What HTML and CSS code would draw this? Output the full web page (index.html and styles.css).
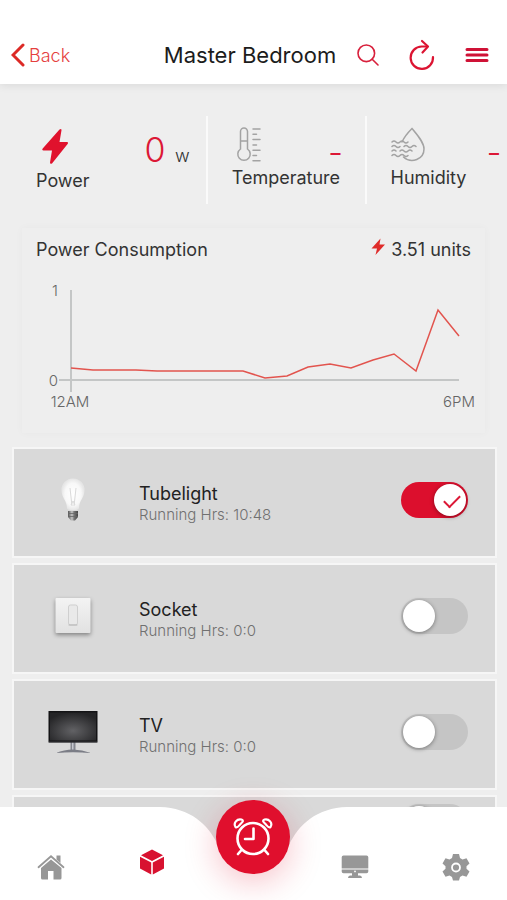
FILE: index.html
```html
<!DOCTYPE html>
<html lang="en">
<head>
    <meta charset="UTF-8">
    <meta name="viewport" content="width=device-width, initial-scale=1.0">
    <title>Master Bedroom</title>
    <link rel="stylesheet" href="styles.css">
</head>
<body>
    <div class="app">
        <header>
            <a href="#" class="back-link">
                <svg width="14" height="24" viewBox="0 0 14 24"><path d="M12 2 2 12l10 10" fill="none" stroke="#dc2a26" stroke-width="3" stroke-linecap="round"/></svg>
                Back
            </a>
            <h1>Master Bedroom</h1>
            <div class="header-actions">
                <button type="button" aria-label="Search">
                    <svg width="22" height="22" viewBox="0 0 22 22" fill="none" stroke="#d8203c" stroke-width="1.6" stroke-linecap="round"><circle cx="9.300" cy="9.300" r="8.300"/><path d="M15.200 15.200 21 21"/></svg>
                </button>
                <button type="button" aria-label="Refresh">
                    <svg width="26" height="32" viewBox="0 0 26 32" fill="none" stroke="#dc1432" stroke-width="2.200" stroke-linecap="round" stroke-linejoin="round"><path d="M24 18A11.200 11.200 0 1 1 12.800 7.500H18"/><path d="M13 2 19 7.500l-5.500 6"/></svg>
                </button>
                <button type="button" aria-label="Menu">
                    <svg width="24" height="16" viewBox="0 0 24 16" stroke="#cf1236" stroke-width="3" stroke-linecap="round"><path d="M2 2.500h20M2 8h20M2 13.500h20"/></svg>
                </button>
            </div>
        </header>

        <main>
            <section class="stats">
                <div class="stat stat-power">
                    <svg width="38" height="38" viewBox="0 0 38 38"><path d="M23.500 1.500q2-1.500 2 .8L23.500 14H31q1.800.2.800 1.800L16 35.500q-2 1-2-1L16 22.500H7.500q-2-.3-.8-2z" fill="#e0122d"/></svg>
                    <div class="stat-value">0 <small>w</small></div>
                    <span class="stat-label">Power</span>
                </div>
                <div class="stat stat-temp">
                    <svg width="34" height="36" viewBox="0 0 34 36" fill="none" stroke="#a3a3a3" stroke-width="1.500" stroke-linecap="round"><path d="M8.500 22V4.500a3.500 3.500 0 0 1 7 0V22a6.200 6.200 0 1 1-7 0zM8.500 14h7"/><path d="M21 2h7M21 7.300h3.500M21 12.600h7M21 17.900h3.500M21 23.200h7M21 28.500h3.500M21 33.800h7"/></svg>
                    <div class="stat-value">–</div>
                    <span class="stat-label">Temperature</span>
                </div>
                <div class="stat stat-humidity">
                    <svg width="34" height="36" viewBox="0 0 34 36" fill="none" stroke="#a3a3a3" stroke-width="1.500" stroke-linecap="round"><path d="M11 15C13 10.500 17.500 5 21 1.500c5.500 6.500 12 14 12 20.500 0 10-12.500 15.500-20.500 8"/><path d="M1 15q2-2 4 0t4 0 4 0 4 0M1 19.500q2-2 4 0t4 0M13 19.500q2-2 4 0t4 0 4 0M1 24q2-2 4 0M9 24q2-2 4 0t4 0 4 0M1 28.500q2-2 4 0t4 0 4 0 4 0"/></svg>
                    <div class="stat-value">–</div>
                    <span class="stat-label">Humidity</span>
                </div>
            </section>

            <section class="chart-card">
                <div class="chart-head">
                    <h2>Power Consumption</h2>
                    <span class="units">
                        <svg width="14" height="18" viewBox="0 0 14 18"><path d="M9.500.5 8.500 6.500H14L4.500 17 6 10.500H.5z" fill="#df2c2a"/></svg>
                        3.51 units
                    </span>
                </div>
                <svg class="chart" viewBox="0 0 463 158" role="img" aria-label="Power consumption by hour">
                    <path class="axis" d="M49 15V117M37 105H437"/>
                    <polyline class="line" points="49,93 71,95 92,95 114,95 135,96 157,96 178,96 200,96 221,96 243,103 265,101 286,92 308,89 329,93 351,85 372,79 394,96 416,35 437,61"/>
                    <text x="36" y="21" text-anchor="end">1</text>
                    <text x="36" y="111" text-anchor="end">0</text>
                    <text x="48" y="132" text-anchor="middle">12AM</text>
                    <text x="437" y="132" text-anchor="middle">6PM</text>
                </svg>
            </section>

            <ul class="devices">
                <li class="device">
                    <svg width="50" height="50" viewBox="0 0 50 50">
                        <defs>
                            <radialGradient id="glass"><stop offset="0" stop-color="#fff"/><stop offset=".7" stop-color="#f8f8f8"/><stop offset="1" stop-color="#e6e6e6"/></radialGradient>
                            <linearGradient id="cap"><stop offset="0" stop-color="#555"/><stop offset=".4" stop-color="#c5c5c5"/><stop offset=".6" stop-color="#777"/><stop offset="1" stop-color="#444"/></linearGradient>
                        </defs>
                        <path d="M25 3.500A11.500 11.500 0 0 0 13.500 15c0 8 5.500 10.500 5.500 18 0 3 12 3 12 0 0-7.500 5.500-10 5.500-18A11.500 11.500 0 0 0 25 3.500z" fill="url(#glass)"/>
                        <path d="m22 13 2 18M28 13l-2 18M23 30l2-4 2 4" fill="none" stroke="#dadada"/>
                        <path d="M20 36h10v6l-3 3.500h-4L20 42z" fill="url(#cap)"/>
                        <path d="M20 38.500h10M20 41.500h10" stroke="#666" stroke-width=".8"/>
                    </svg>
                    <div class="device-info">
                        <label for="tubelight">Tubelight</label>
                        <p>Running Hrs: 10:48</p>
                    </div>
                    <input type="checkbox" class="toggle" id="tubelight" checked>
                </li>
                <li class="device">
                    <svg width="50" height="50" viewBox="0 0 50 50">
                        <defs>
                            <linearGradient id="plate" x2="0" y2="1"><stop offset="0" stop-color="#f3f3f3"/><stop offset="1" stop-color="#e2e2e2"/></linearGradient>
                        </defs>
                        <rect class="plate" x="7.500" y="7" width="35" height="35" rx="1" fill="url(#plate)"/>
                        <rect x="20.500" y="14" width="9" height="20" rx="2" fill="#e9e9e9" stroke="#cfcfcf"/>
                        <path d="M21 34h8" stroke="#b5b5b5" stroke-linecap="round"/>
                    </svg>
                    <div class="device-info">
                        <label for="socket">Socket</label>
                        <p>Running Hrs: 0:0</p>
                    </div>
                    <input type="checkbox" class="toggle" id="socket">
                </li>
                <li class="device">
                    <svg width="50" height="50" viewBox="0 0 50 50">
                        <defs>
                            <radialGradient id="screen" cx=".5" cy=".65" r=".65"><stop offset="0" stop-color="#626265"/><stop offset="1" stop-color="#242426"/></radialGradient>
                        </defs>
                        <path d="M22.500 34h5v9h-5z" fill="#85878f"/>
                        <path d="M24 35h1.500v8H24z" fill="#c6c8cf"/>
                        <path d="M8 46q8-3.500 17-3.500T43 46q-9-.8-18-.8T8 46z" fill="#7b7d86"/>
                        <rect x=".5" y="4" width="49" height="31.500" fill="#131315"/>
                        <rect x="2" y="5.500" width="46" height="28" fill="url(#screen)"/>
                        <path d="M1 35h48" stroke="#48484c" stroke-width=".8"/>
                    </svg>
                    <div class="device-info">
                        <label for="tv">TV</label>
                        <p>Running Hrs: 0:0</p>
                    </div>
                    <input type="checkbox" class="toggle" id="tv">
                </li>
                <li class="device device-short">
                    <input type="checkbox" class="toggle" aria-label="Device">
                </li>
            </ul>
        </main>

        <nav>
            <svg class="nav-shape" viewBox="0 0 507 93" preserveAspectRatio="none"><path d="M0 0H160C190 1 208 17 218 38 232 68 275 68 289 38 299 17 317 1 347 0H507V93H0z" fill="#fff"/></svg>
            <a href="#" aria-label="Home">
                <svg width="28" height="28" viewBox="0 0 28 28" fill="#979797"><path d="M14 6.500 4 15v10q0 1.500 1.500 1.500H11v-8.500h5.500v8.500H23q1.500 0 1.500-1.500V15z"/><path d="M1.500 14.200 14 3.200l12.500 11" fill="none" stroke="#979797" stroke-width="1.800" stroke-linecap="round"/><path d="M19.500 2.500h4V10l-4-3.500z"/></svg>
            </a>
            <a href="#" class="active" aria-label="Rooms">
                <svg width="26" height="26" viewBox="0 0 26 26" fill="#d81230"><path d="M13 .5 24 6.200 13 12 2 6.200zM1 7.800l11.200 5.700V25.500L1 19.500zM25 7.800l-11.200 5.700V25.500L25 19.500z"/></svg>
            </a>
            <a href="#" class="alarm" aria-label="Alarm">
                <svg width="42" height="40" viewBox="0 0 42 40" fill="none" stroke="#fff" stroke-width="2.600" stroke-linecap="round" stroke-linejoin="round"><circle cx="21" cy="21.500" r="15.500"/><path d="M21.500 11.500V22H13M9.500 33 6 37M32.500 33 36 37"/><path d="M3.500 10C1 6 5 1.500 9.500 2.500c2.500 1 1 2.500-.5 4C6.500 9 5.500 11.500 3.500 10zM38.500 10C41 6 37 1.500 32.500 2.500c-2.500 1-1 2.500.5 4C35.500 9 36.500 11.500 38.500 10z" stroke-width="2.200"/></svg>
            </a>
            <a href="#" aria-label="Devices">
                <svg width="28" height="24" viewBox="0 0 28 24" fill="#979797"><path d="M2.500.5h23q1.800 0 1.800 1.800V13.500H.7V2.300Q.7.500 2.500.5zM.7 14.500h26.600v2q0 1.800-1.800 1.800H17v2.200h2q1.800.3 2 2.500H7q.2-2.200 2-2.500h2v-2.200H2.500Q.7 18.300.7 16.500z"/><circle cx="14" cy="16.400" r=".9" fill="#fff"/></svg>
            </a>
            <a href="#" aria-label="Settings">
                <svg width="28" height="28" viewBox="0 0 28 28"><path d="M11 1h6l1 4 2.500 1.500 4-1.200 3 5.200-3 2.800v2.400l3 2.800-3 5.200-4-1.200L18 24l-1 3.500h-6L10 24l-2.500-1.500-4 1.200-3-5.200 3-2.800v-2.400l-3-2.800 3-5.200 4 1.200L10 5z" fill="#979797"/><circle cx="14" cy="14.500" r="4" fill="#979797" stroke="#fff" stroke-width="1.800"/></svg>
            </a>
        </nav>
    </div>
</body>
</html>
```
FILE: styles.css
```css
* {
    box-sizing: border-box;
}
body {
    margin: 0;
    font-family: Inter, "Liberation Sans", sans-serif;
    background-color: #eee;
    color: #333;
}
h1, h2, p, ul {
    margin: 0;
    padding: 0;
}
svg {
    display: block;
}
.app {
    position: relative;
    display: flex;
    flex-direction: column;
    height: 100vh;
    overflow: hidden;
}

/* Top bar */
header {
    display: grid;
    grid-template-columns: 1fr auto 1fr;
    align-items: center;
    padding: 26px 18px 0 11px;
    height: 84px;
    flex-shrink: 0;
    background-color: #fff;
    box-shadow: 0 2px 8px rgba(0, 0, 0, 0.08);
    z-index: 1;
}
header h1 {
    font-size: 22px;
    font-weight: 400;
    color: #1c1c1c;
}
.back-link {
    display: flex;
    align-items: center;
    gap: 4px;
    font-size: 18px;
    font-weight: 300;
    color: #e5403e;
    text-decoration: none;
}
.header-actions {
    display: flex;
    justify-content: flex-end;
    align-items: center;
    gap: 30px;
}
.header-actions button {
    padding: 0;
    border: none;
    background: none;
    cursor: pointer;
}

main {
    flex: 1;
    overflow-y: auto;
    scrollbar-width: none;
    padding-bottom: 93px;
}

/* Readings */
.stats {
    display: grid;
    grid-template-columns: 34fr 26fr 23fr;
    margin-top: 32px;
    height: 88px;
}
.stat {
    display: grid;
    grid-template-columns: auto 1fr;
    align-content: start;
    padding-top: 11px;
    border-right: 2px solid #fafafa;
}
.stat-power {
    padding: 12px 16px 0 36px;
}
.stat-temp {
    padding-left: 24px;
    padding-right: 24px;
}
.stat-humidity {
    padding-left: 24px;
    padding-right: 8px;
    border-right: none;
}
.stat-value {
    align-self: end;
    text-align: right;
    font-size: 20px;
    line-height: 20px;
    font-weight: 600;
    color: #dc1836;
}
.stat-power .stat-value {
    font-size: 34px;
    font-weight: 300;
}
.stat-value small {
    font-size: 18px;
    color: #333;
}
.stat-label {
    grid-column: 1 / 3;
    margin-top: 4px;
    font-size: 18px;
    line-height: 22px;
}

/* Consumption chart */
.chart-card {
    margin: 24px 22px 0;
    box-shadow: 0 0 8px rgba(0, 0, 0, 0.03);
}
.chart-head {
    display: flex;
    justify-content: space-between;
    padding: 10px 14px 13px;
    font-size: 18px;
    line-height: 24px;
}
.chart-head h2 {
    font-size: 18px;
    font-weight: 400;
}
.units {
    display: flex;
    gap: 6px;
}
.chart {
    width: 100%;
}
.chart text {
    font-size: 15px;
    font-weight: 300;
    fill: #666;
}
.axis {
    fill: none;
    stroke: #c4c6c6;
    stroke-width: 2;
}
.line {
    fill: none;
    stroke: #e2544e;
    stroke-width: 1.5;
}

/* Device list */
.devices {
    display: flex;
    flex-direction: column;
    gap: 5px;
    margin: 14px 10px 0 12px;
    list-style: none;
}
.device {
    display: flex;
    align-items: center;
    gap: 41px;
    height: 111px;
    padding: 0 27px 6px 34px;
    border: 2px solid #f6f6f6;
    background-color: #d9d9d9;
}
.device-short {
    height: 60px;
}
.device-info {
    padding-top: 8px;
}
.device-info label {
    display: block;
    font-size: 18px;
    line-height: 22px;
    color: #222;
}
.device-info p {
    font-size: 15px;
    line-height: 20px;
    font-weight: 300;
    color: #707070;
}
.plate {
    filter: drop-shadow(0 2px 2px rgba(0, 0, 0, 0.4));
}
.toggle {
    appearance: none;
    position: relative;
    width: 67px;
    height: 36px;
    margin: 0 0 0 auto;
    border-radius: 18px;
    background-color: #c5c5c5;
    cursor: pointer;
}
.toggle::before {
    content: "";
    position: absolute;
    top: 2px;
    left: 2px;
    width: 32px;
    height: 32px;
    border-radius: 50%;
    background-color: #fff;
    box-shadow: 0 1px 4px rgba(0, 0, 0, 0.4);
}
.toggle:checked {
    background-color: #dc0f2d;
}
.toggle:checked::before {
    left: 33px;
}
.toggle:checked::after {
    content: "";
    position: absolute;
    top: 13px;
    left: 43px;
    width: 14px;
    height: 7px;
    border-left: 2px solid #dc1836;
    border-bottom: 2px solid #dc1836;
    transform: rotate(-45deg);
}

/* Bottom navigation */
nav {
    position: absolute;
    left: 0;
    right: 0;
    bottom: 0;
    display: grid;
    grid-template-columns: repeat(5, 1fr);
    justify-items: center;
    align-items: center;
    height: 93px;
    padding-top: 26px;
}
.nav-shape {
    position: absolute;
    top: 0;
    left: 0;
    width: 100%;
    height: 100%;
}
nav a {
    position: relative;
}
nav .active {
    margin-bottom: 10px;
}
nav .alarm {
    display: flex;
    justify-content: center;
    align-items: center;
    width: 74px;
    height: 74px;
    margin-top: -60px;
    border-radius: 50%;
    background-color: #e00f2d;
    box-shadow: 0 8px 32px rgba(224, 15, 45, 0.25);
}
```
